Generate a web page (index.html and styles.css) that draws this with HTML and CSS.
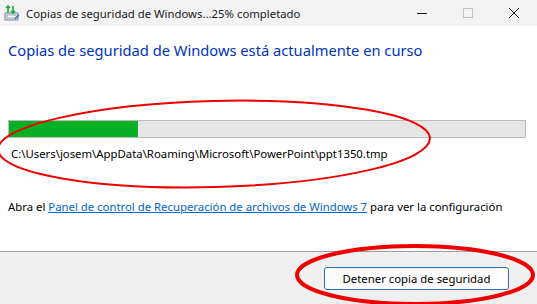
FILE: index.html
```html
<!DOCTYPE html>
<html lang="es">
<head>
    <meta charset="UTF-8">
    <title>Copias de seguridad de Windows</title>
    <link rel="stylesheet" href="styles.css">
</head>
<body>
    <div class="window">
        <div class="titlebar">
            <svg class="app-icon" width="16" height="16" viewBox="0 0 16 16">
                <rect x="1" y="8" width="13" height="7" fill="#dfe6ee" stroke="#7d8a99"/>
                <rect x="3" y="10" width="9" height="3" fill="#ffffff" stroke="#9aa6b3"/>
                <path d="M4 1 L4 8 M2 3 L4 1 L6 3" stroke="#1fa83a" stroke-width="1.6" fill="none"/>
                <path d="M9 8 L9 1 M7 6 L9 8 L11 6" stroke="#1fa83a" stroke-width="1.6" fill="none"/>
                <path d="M11 14 L15 10" stroke="#2f66c8" stroke-width="1.2"/>
            </svg>
            <span class="title">Copias de seguridad de Windows...25% completado</span>
            <div class="controls">
                <span class="ctl">
                    <svg width="10" height="10" viewBox="0 0 10 10"><path d="M0 5.5 H10" stroke="#1a1a1a" stroke-width="1"/></svg>
                </span>
                <span class="ctl">
                    <svg width="10" height="10" viewBox="0 0 10 10"><rect x="0.5" y="0.5" width="9" height="9" fill="none" stroke="#c4c4c4"/></svg>
                </span>
                <span class="ctl">
                    <svg width="10" height="10" viewBox="0 0 10 10"><path d="M0 0 L10 10 M10 0 L0 10" stroke="#1a1a1a" stroke-width="1"/></svg>
                </span>
            </div>
        </div>

        <div class="content">
            <h1 class="heading">Copias de seguridad de Windows está actualmente en curso</h1>
            <div class="progress">
                <div class="progress-fill" style="width: 25%"></div>
            </div>
            <div class="file-path">C:\Users\josem\AppData\Roaming\Microsoft\PowerPoint\ppt1350.tmp</div>
            <p class="info">Abra el <a href="#">Panel de control de Recuperación de archivos de Windows 7</a> para ver la configuración</p>
        </div>

        <div class="footer">
            <button class="btn">Detener copia de seguridad</button>
        </div>

        <!-- red marks drawn over the screenshot -->
        <svg class="marks" width="537" height="304" viewBox="0 0 537 304">
            <ellipse cx="214" cy="144" rx="216" ry="43" transform="rotate(-1.5 214 144)" fill="none" stroke="#ee0000" stroke-width="2"/>
            <ellipse cx="415" cy="275" rx="118" ry="29" fill="none" stroke="#ee0000" stroke-width="4"/>
        </svg>
    </div>
</body>
</html>
```

FILE: styles.css
```css
body {
    margin: 0;
    font-family: 'Noto Sans', sans-serif;
    font-size: 11.35px;
    color: #000;
    background: #fff;
}

.window {
    position: relative;
    width: 537px;
    height: 304px;
    display: flex;
    flex-direction: column;
    overflow: hidden;
}

.titlebar {
    height: 26px;
    flex-shrink: 0;
    background: #f3f3f3;
    display: flex;
    align-items: center;
    padding-left: 4px;
}

.app-icon {
    margin-right: 6px;
}

.title {
    flex: 1;
    font-size: 11.35px;
    color: #1a1a1a;
}

.controls {
    display: flex;
    height: 100%;
}

.ctl {
    width: 46px;
    display: flex;
    align-items: center;
    justify-content: center;
}

.content {
    flex: 1;
    padding: 0 8px;
}

.heading {
    margin: 14px 0 0;
    font-size: 14.7px;
    font-weight: normal;
    color: #0033bc;
    line-height: 21px;
}

.progress {
    margin-top: 59px;
    width: 516px;
    height: 16px;
    border: 1px solid #bcbcbc;
    background: #e6e6e6;
}

.progress-fill {
    height: 100%;
    background: #06b025;
}

.file-path {
    margin-top: 8px;
    padding-left: 3px;
    line-height: 16px;
    white-space: nowrap;
}

.info {
    margin: 37px 0 0;
    line-height: 16px;
    white-space: nowrap;
}

.info a {
    color: #0066cc;
}

.footer {
    height: 53px;
    flex-shrink: 0;
    border-top: 1px solid #a0a0a0;
    background: #f0f0f0;
    display: flex;
    justify-content: flex-end;
    align-items: flex-start;
    padding: 15px 28px 0 0;
    box-sizing: border-box;
}

.btn {
    width: 185px;
    height: 23px;
    font-family: 'Noto Sans', sans-serif;
    font-size: 11.35px;
    color: #000;
    background: #fdfdfd;
    border: 1px solid #2f6fb8;
    border-radius: 3px;
    padding: 0;
}

.marks {
    position: absolute;
    left: 0;
    top: 0;
    pointer-events: none;
}
```
